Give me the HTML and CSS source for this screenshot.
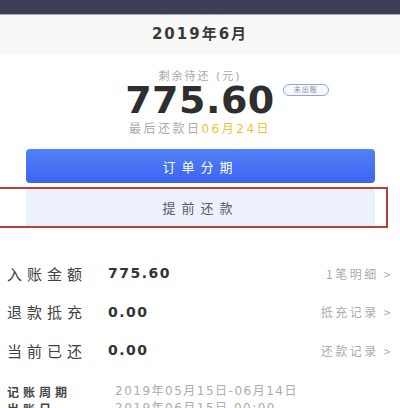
FILE: index.html
```html
<!DOCTYPE html>
<html lang="zh-CN">

<head>
    <meta charset="UTF-8">
    <meta name="viewport" content="width=device-width, initial-scale=1.0">
    <title>账单详情</title>
    <link rel="stylesheet" href="styles.css">
</head>

<body>
    <div class="status-bar"></div>
    <div class="month-bar">2019年6月</div>

    <div class="summary">
        <div class="summary-label">剩余待还 (元)</div>
        <div class="amount-wrap">
            <span class="amount">775.60</span>
            <span class="badge">未出账</span>
        </div>
        <div class="due-date">最后还款日<span class="due-day">06月24日</span></div>
    </div>

    <div class="actions">
        <button type="button" class="btn-primary">订单分期</button>
        <div class="highlight">
            <button type="button" class="btn-light">提前还款</button>
        </div>
    </div>

    <div class="detail-list">
        <div class="detail-row">
            <span class="detail-label">入账金额</span>
            <span class="detail-value">775.60</span>
            <span class="detail-link">1笔明细 &gt;</span>
        </div>
        <div class="detail-row">
            <span class="detail-label">退款抵充</span>
            <span class="detail-value">0.00</span>
            <span class="detail-link">抵充记录 &gt;</span>
        </div>
        <div class="detail-row">
            <span class="detail-label">当前已还</span>
            <span class="detail-value">0.00</span>
            <span class="detail-link">还款记录 &gt;</span>
        </div>
    </div>

    <div class="info-list">
        <div class="info-row">
            <span class="info-label">记账周期</span>
            <span class="info-value">2019年05月15日-06月14日</span>
        </div>
        <div class="info-row">
            <span class="info-label">出账日</span>
            <span class="info-value">2019年06月15日 00:00</span>
        </div>
    </div>
</body>

</html>
```

FILE: styles.css
```css
* {
    margin: 0;
    padding: 0;
    box-sizing: border-box;
}

body {
    width: 400px;
    height: 408px;
    overflow: hidden;
    background-color: #fff;
    font-family: 'DejaVu Sans', 'Noto Sans CJK SC', sans-serif;
    color: #333;
}

.status-bar {
    height: 15px;
    background-color: #3d4055;
    border-bottom: 1px solid #a3a4b8;
}

.month-bar {
    height: 39px;
    line-height: 39px;
    background-color: #f8f8f6;
    text-align: center;
    font-size: 15px;
    font-weight: bold;
    letter-spacing: 2px;
    color: #3a3a3a;
}

.summary {
    padding-top: 15px;
    text-align: center;
}

.summary-label {
    font-size: 11px;
    line-height: 16px;
    letter-spacing: 2px;
    color: #a8a8a8;
}

.amount-wrap {
    position: relative;
    display: inline-block;
    height: 30px;
}

.amount {
    font-size: 38px;
    line-height: 30px;
    font-weight: bold;
    letter-spacing: 0.5px;
    color: #2e2e2e;
}

.badge {
    position: absolute;
    left: 100%;
    top: -1px;
    margin-left: 8px;
    width: 46px;
    height: 12px;
    line-height: 10px;
    border: 1px solid #8fa6d6;
    border-radius: 7px;
    font-size: 7px;
    letter-spacing: 1px;
    color: #7f8fb0;
    background-color: #f6f8fd;
}

.due-date {
    margin-top: 4px;
    font-size: 12px;
    line-height: 16px;
    letter-spacing: 2.5px;
    color: #a8a8a8;
}

.due-day {
    color: #f0c23a;
}

.actions {
    margin-top: 12px;
}

.btn-primary,
.btn-light {
    display: block;
    border: none;
    border-radius: 4px;
    font-family: 'Noto Sans CJK SC', sans-serif;
    font-size: 13px;
    letter-spacing: 6px;
    cursor: pointer;
}

.btn-primary {
    width: 349px;
    height: 34px;
    margin-left: 26px;
    background: linear-gradient(#4f82f8, #3f63f0);
    color: #fff;
}

.highlight {
    width: 398px;
    margin-left: -10px;
    margin-top: 4px;
    padding: 0 11px 0 34px;
    border: 2px solid #b2423e;
}

.btn-light {
    width: 349px;
    height: 37px;
    border-radius: 0;
    background-color: #edf1fc;
    color: #555a66;
}

.detail-list {
    margin-top: 26px;
    padding: 0 7px 0 7px;
}

.detail-row {
    display: flex;
    align-items: center;
    height: 38.5px;
}

.detail-label {
    width: 101px;
    font-family: 'Noto Sans CJK SC', sans-serif;
    font-size: 15px;
    letter-spacing: 5px;
    color: #404040;
}

.detail-value {
    flex: 1;
    font-size: 14px;
    font-weight: bold;
    letter-spacing: 1.5px;
    color: #333;
}

.detail-link {
    font-family: 'Noto Sans CJK SC', sans-serif;
    font-size: 12px;
    letter-spacing: 2.5px;
    color: #ababab;
}

.info-list {
    margin-top: 13px;
    padding-left: 7px;
}

.info-row {
    display: flex;
    height: 17px;
    line-height: 17px;
}

.info-label {
    width: 108px;
    font-family: 'Noto Sans CJK SC', sans-serif;
    font-size: 12px;
    font-weight: bold;
    letter-spacing: 4px;
    color: #444;
}

.info-value {
    font-size: 12px;
    letter-spacing: 1.5px;
    color: #ababab;
}
```
